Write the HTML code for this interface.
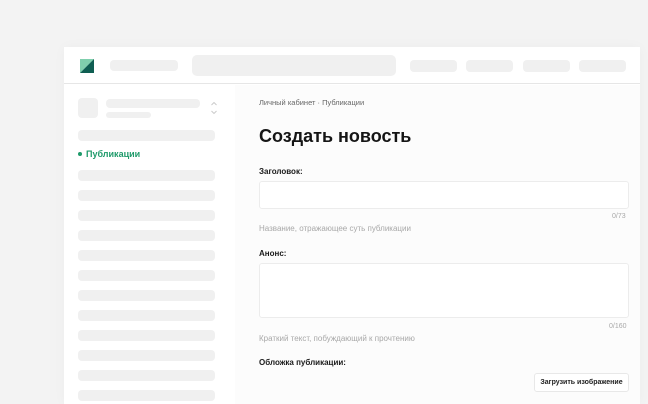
<!DOCTYPE html>
<html><head><meta charset="utf-8"><style>
*{margin:0;padding:0;box-sizing:border-box}
html,body{width:648px;height:404px;overflow:hidden}
body{background:#f3f3f3;font-family:"Liberation Sans",Arial,sans-serif;position:relative}
.a{position:absolute}
.sk{position:absolute;background:#f0f0f0;border-radius:4px}
.win{left:64px;top:47px;width:576px;height:357px;background:#fff;box-shadow:0 0 12px rgba(0,0,0,.03)}
.hdr{left:64px;top:47px;width:576px;height:37px;border-bottom:1px solid #e6e6e6;background:#fff}
.main{left:235px;top:85px;width:405px;height:319px;background:#fcfcfc}
.lbl{font-size:8px;font-weight:bold;color:#1a1a1a}
.hint{font-size:8px;color:#a8a8a8}
.inp{background:#fff;border:1px solid #ececec;border-radius:3px}
</style></head><body>
<div class="a win"></div>
<div class="a hdr"></div>
<svg class="a" style="left:80px;top:59px" width="14" height="14"><polygon points="0,0 14,0 0,14" fill="#7fcfad"/><polygon points="14,0 14,14 0,14" fill="#0f5e52"/></svg>
<div class="sk" style="left:110px;top:60px;width:68px;height:11px"></div>
<div class="sk" style="left:192px;top:55px;width:204px;height:21px;border-radius:5px"></div>
<div class="sk" style="left:410px;top:60px;width:47px;height:12px"></div>
<div class="sk" style="left:466px;top:60px;width:47px;height:12px"></div>
<div class="sk" style="left:523px;top:60px;width:47px;height:12px"></div>
<div class="sk" style="left:579px;top:60px;width:47px;height:12px"></div>
<div class="a main"></div>
<div class="sk" style="left:78px;top:98px;width:20px;height:20px"></div>
<div class="sk" style="left:106px;top:99px;width:94px;height:9px"></div>
<div class="sk" style="left:106px;top:112px;width:45px;height:6px"></div>
<svg class="a" style="left:210px;top:101px" width="8" height="14"><path d="M1.5 4 L4 1.5 L6.5 4 M1.5 10 L4 12.5 L6.5 10" fill="none" stroke="#c8c8c8" stroke-width="0.9"/></svg>
<div class="sk" style="left:78px;top:130px;width:137px;height:11px"></div>
<div class="a" style="left:78px;top:149px;font-size:9px;font-weight:bold;color:#1e9a6a"><span style="display:inline-block;width:4px;height:4px;border-radius:50%;background:#1e9a6a;vertical-align:middle;margin-right:4px;position:relative;top:-1px"></span>Публикации</div>
<div class="sk" style="left:78px;top:170px;width:137px;height:11px"></div>
<div class="sk" style="left:78px;top:190px;width:137px;height:11px"></div>
<div class="sk" style="left:78px;top:210px;width:137px;height:11px"></div>
<div class="sk" style="left:78px;top:230px;width:137px;height:11px"></div>
<div class="sk" style="left:78px;top:250px;width:137px;height:11px"></div>
<div class="sk" style="left:78px;top:270px;width:137px;height:11px"></div>
<div class="sk" style="left:78px;top:290px;width:137px;height:11px"></div>
<div class="sk" style="left:78px;top:310px;width:137px;height:11px"></div>
<div class="sk" style="left:78px;top:330px;width:137px;height:11px"></div>
<div class="sk" style="left:78px;top:350px;width:137px;height:11px"></div>
<div class="sk" style="left:78px;top:370px;width:137px;height:11px"></div>
<div class="sk" style="left:78px;top:390px;width:137px;height:11px"></div>
<div class="a" style="left:259px;top:98px;font-size:7.5px;color:#666">Личный кабинет · Публикации</div>
<div class="a" style="left:259px;top:126px;font-size:18px;font-weight:bold;color:#151515">Создать новость</div>
<div class="a lbl" style="left:259px;top:167px">Заголовок:</div>
<div class="a inp" style="left:259px;top:181px;width:370px;height:28px"></div>
<div class="a hint" style="left:612px;top:213px;font-size:7px">0/73</div>
<div class="a hint" style="left:259px;top:224px">Название, отражающее суть публикации</div>
<div class="a lbl" style="left:259px;top:249px">Анонс:</div>
<div class="a inp" style="left:259px;top:263px;width:370px;height:55px"></div>
<div class="a hint" style="left:609px;top:323px;font-size:7px">0/160</div>
<div class="a hint" style="left:259px;top:334px">Краткий текст, побуждающий к прочтению</div>
<div class="a lbl" style="left:259px;top:358px">Обложка публикации:</div>
<div class="a" style="left:534px;top:373px;width:95px;height:19px;background:#fff;border:1px solid #e8e8e8;border-radius:3px;font-size:7px;font-weight:bold;color:#222;text-align:center;line-height:17px">Загрузить изображение</div>
</body></html>
